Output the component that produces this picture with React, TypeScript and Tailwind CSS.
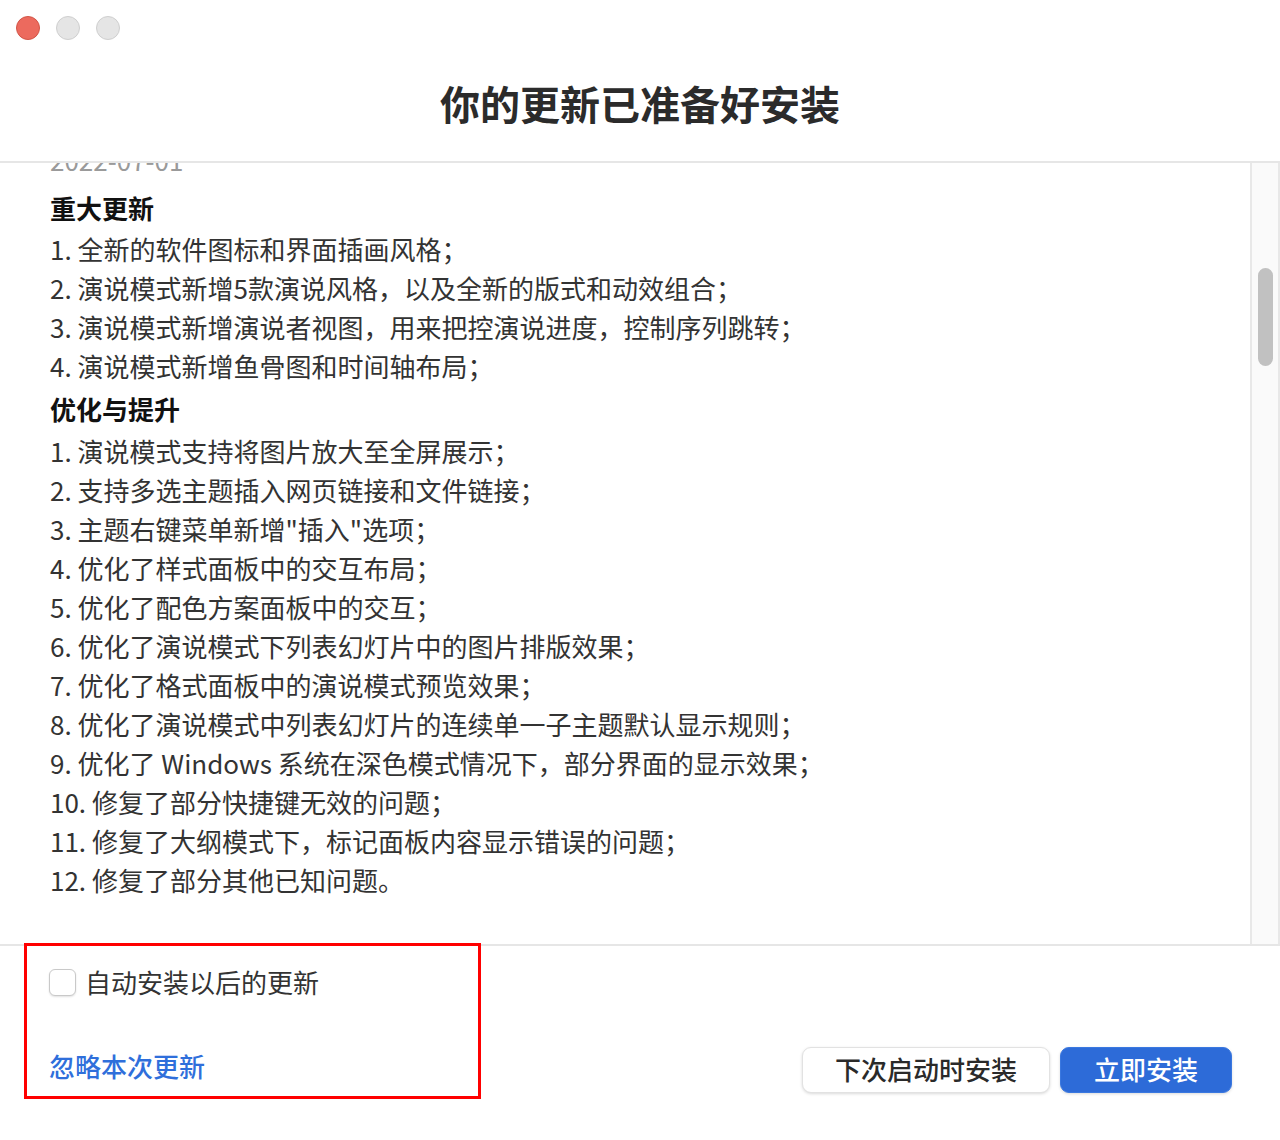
const major = [
  "1. 全新的软件图标和界面插画风格；",
  "2. 演说模式新增5款演说风格，以及全新的版式和动效组合；",
  "3. 演说模式新增演说者视图，用来把控演说进度，控制序列跳转；",
  "4. 演说模式新增鱼骨图和时间轴布局；",
];

const improve = [
  "1. 演说模式支持将图片放大至全屏展示；",
  "2. 支持多选主题插入网页链接和文件链接；",
  '3. 主题右键菜单新增"插入"选项；',
  "4. 优化了样式面板中的交互布局；",
  "5. 优化了配色方案面板中的交互；",
  "6. 优化了演说模式下列表幻灯片中的图片排版效果；",
  "7. 优化了格式面板中的演说模式预览效果；",
  "8. 优化了演说模式中列表幻灯片的连续单一子主题默认显示规则；",
  "9. 优化了 Windows 系统在深色模式情况下，部分界面的显示效果；",
  "10. 修复了部分快捷键无效的问题；",
  "11. 修复了大纲模式下，标记面板内容显示错误的问题；",
  "12. 修复了部分其他已知问题。",
];

export default function App() {
  return (
    <div
      className="w-[1280px] h-[1140px] bg-white flex flex-col overflow-hidden text-[#2a2a2a]"
      style={{ fontFamily: '"Noto Sans CJK SC", "Noto Sans", sans-serif' }}
    >
      {/* Header */}
      <header className="h-[163px] shrink-0 border-b-2 border-[#e6e6e6] flex flex-col">
        <div className="flex gap-4 pl-4 pt-4">
          <span className="w-6 h-6 rounded-full bg-[#ec6a5e] border border-[#d25547]" />
          <span className="w-6 h-6 rounded-full bg-[#e5e5e5] border border-[#cfcfcf]" />
          <span className="w-6 h-6 rounded-full bg-[#e5e5e5] border border-[#cfcfcf]" />
        </div>
        <h1 className="mt-[37px] text-center text-[40px] leading-[52px] font-bold text-[#2b2b2b]">
          你的更新已准备好安装
        </h1>
      </header>

      {/* Release notes */}
      <div className="h-[781px] shrink-0 flex overflow-hidden">
        <div className="flex-1 overflow-hidden">
          <div className="-mt-[23px] pl-[50px] text-[26px]">
            <div className="h-[39px] leading-[39px] text-[#9a9a9a]">2022-07-01</div>
            <div className="mt-[8px] h-[42px] leading-[42px] font-bold text-[#111]">重大更新</div>
            {major.map((t) => (
              <div key={t} className="h-[39px] leading-[39px] text-[#333]">
                {t}
              </div>
            ))}
            <div className="mt-[2px] h-[44px] leading-[44px] font-bold text-[#111]">优化与提升</div>
            {improve.map((t) => (
              <div key={t} className="h-[39px] leading-[39px] text-[#333]">
                {t}
              </div>
            ))}
            <div className="mt-[34px] h-[39px] leading-[39px] text-[#9a9a9a]">2022-06-17</div>
          </div>
        </div>
        <div className="w-[30px] shrink-0 border-l-2 border-r-2 border-[#e8e8e8] bg-[#fafafa] pt-[105px] flex justify-center">
          <div className="w-[15px] h-[98px] rounded-full bg-[#c1c1c1]" />
        </div>
      </div>

      {/* Footer */}
      <footer className="flex-1 border-t-2 border-[#e6e6e6] flex items-start justify-between">
        <div className="relative ml-[24px] -mt-[3px] w-[457px] h-[156px] border-[3px] border-[#ff0000] pl-[22px] pt-[19px] flex flex-col">
          <label className="flex items-center gap-[9px]">
            <span className="w-[27px] h-[27px] rounded-[6px] border border-[#c9c9c9] bg-white shadow-[0_1px_2px_rgba(0,0,0,0.12)]" />
            <span className="text-[26px] leading-[34px] text-[#333]">自动安装以后的更新</span>
          </label>
          <a className="mt-[50px] text-[26px] leading-[34px] font-medium text-[#2f6fdb]">忽略本次更新</a>
        </div>
        <div className="flex gap-[10px] mt-[101px] mr-[48px]">
          <button className="w-[248px] h-[46px] pb-[3px] rounded-[9px] bg-white border border-[#e2e2e2] shadow-[0_1px_3px_rgba(0,0,0,0.15)] text-[26px] font-medium text-[#2a2a2a]">
            下次启动时安装
          </button>
          <button className="w-[172px] h-[46px] pb-[3px] rounded-[9px] bg-[#2d6bd8] border border-[#3a78e0] shadow-[0_1px_3px_rgba(0,0,0,0.15)] text-[26px] font-medium text-white">
            立即安装
          </button>
        </div>
      </footer>
    </div>
  );
}
